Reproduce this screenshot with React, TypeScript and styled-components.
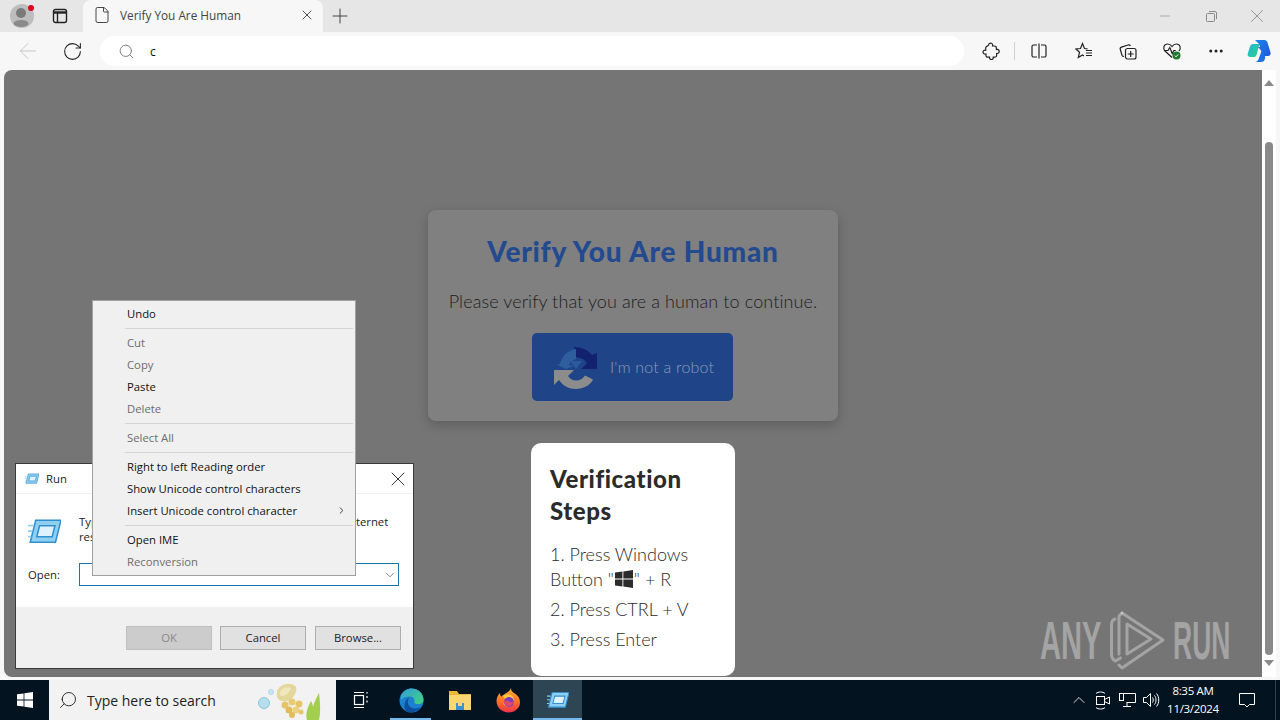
import React from "react";
import styled, { createGlobalStyle } from "styled-components";
import { ArrowLeft, ChevronDown, ChevronRight, ChevronUp, File, Minus, MoreHorizontal, Plus, RotateCw, Search, X } from "lucide-react";

const GlobalStyle = createGlobalStyle`
  html, body {
    margin: 0;
    padding: 0;
    overflow: hidden;
    background: #f7f7f7;
  }
  * {
    box-sizing: border-box;
  }
`;

const uiFont = `"Open Sans", "Noto Sans", sans-serif`;
const pageFont = `Lato, "Noto Sans", sans-serif`;

const Desktop = styled.div`
  position: relative;
  width: 1280px;
  height: 720px;
  display: flex;
  flex-direction: column;
  overflow: hidden;
  font-family: ${uiFont};
  font-size: 11.3px;
`;

const TabStrip = styled.div`
  height: 32px;
  flex: none;
  display: flex;
  align-items: flex-end;
  background: #e6e6e6;
`;

const Profile = styled.div`
  position: relative;
  width: 44px;
  height: 32px;
  display: flex;
  align-items: center;
  justify-content: center;
`;

const RedDot = styled.span`
  position: absolute;
  left: 28px;
  top: 5px;
  width: 6px;
  height: 6px;
  border-radius: 50%;
  background: #e0001b;
`;

const TabActions = styled.div`
  width: 39px;
  height: 32px;
  display: flex;
  align-items: center;
  justify-content: center;
  padding-right: 7px;
`;

const Tab = styled.div`
  width: 240px;
  height: 32px;
  display: flex;
  align-items: center;
  padding: 0 8px 2px 10px;
  background: #f7f7f7;
  border-radius: 8px 8px 0 0;
  color: #444;
  font-size: 11.8px;
`;

const TabTitle = styled.span`
  flex: 1;
  margin-left: 9px;
`;

const NewTab = styled.div`
  width: 34px;
  height: 32px;
  display: flex;
  align-items: center;
  justify-content: center;
`;

const WindowControls = styled.div`
  margin-left: auto;
  height: 32px;
  display: flex;
  align-items: center;
`;

const WindowButton = styled.div`
  width: 46px;
  height: 32px;
  display: flex;
  align-items: center;
  justify-content: center;
  color: #888;
`;

const Toolbar = styled.div`
  height: 38px;
  flex: none;
  display: flex;
  align-items: center;
  background: #f7f7f7;
`;

const NavButton = styled.div<{ $width: number }>`
  width: ${(p) => p.$width}px;
  height: 38px;
  display: flex;
  align-items: center;
  justify-content: center;
  flex: none;
`;

const AddressBar = styled.div`
  width: 864px;
  height: 30px;
  margin: 0 5px 0 11px;
  padding-left: 18px;
  display: flex;
  align-items: center;
  gap: 15px;
  border-radius: 15px;
  background: #fff;
  color: #111;
  font-size: 12px;
  flex: none;
`;

const ToolDivider = styled.span`
  width: 1px;
  height: 18px;
  margin: 0 1px;
  background: #cfcfcf;
  flex: none;
`;

const Content = styled.div`
  flex: 1;
  display: flex;
  padding: 0 4px 3px;
  background: #f7f7f7;
  min-height: 0;
`;

const Page = styled.div`
  flex: 1;
  display: flex;
  flex-direction: column;
  align-items: center;
  padding-top: 140px;
  background: #757575;
  border-radius: 8px 0 0 8px;
  font-family: ${pageFont};
`;

const Card = styled.div`
  width: 410px;
  height: 211px;
  padding-top: 23px;
  display: flex;
  flex-direction: column;
  align-items: center;
  background: #808080;
  border-radius: 8px;
  box-shadow: 0 4px 12px rgba(0, 0, 0, 0.2);
`;

const CardTitle = styled.h1`
  margin: 0;
  font-size: 28px;
  line-height: 36px;
  font-weight: 900;
  letter-spacing: 0.8px;
  color: #234a8f;
`;

const CardText = styled.p`
  margin: 20px 0 0;
  font-size: 18px;
  line-height: 24px;
  font-weight: 300;
  letter-spacing: 0.1px;
  color: #1d1d1d;
`;

const RobotButton = styled.div`
  width: 201px;
  height: 68px;
  margin: 20px 1px 0 0;
  padding: 0 0 1px 20px;
  display: flex;
  align-items: center;
  gap: 12px;
  background: #1f4488;
  border-radius: 5px;
  color: #8c9dbb;
  font-size: 16px;
  font-weight: 300;
  letter-spacing: 0.2px;
`;

const Steps = styled.div`
  width: 204px;
  height: 233px;
  margin-top: 22px;
  padding: 20px 19px;
  background: #fff;
  border-radius: 10px;
  color: #2b2b2b;
`;

const StepsTitle = styled.h2`
  margin: 0 0 15px;
  font-size: 24px;
  line-height: 32px;
  font-weight: 900;
  letter-spacing: 0.6px;
`;

const Step = styled.div`
  margin-top: 5px;
  font-size: 18px;
  line-height: 25px;
  font-weight: 300;
`;

const FlagSlot = styled.span`
  display: inline-block;
  margin: 0 1px;
`;

const ScrollBar = styled.div`
  width: 14px;
  display: flex;
  flex-direction: column;
  align-items: center;
  padding: 10px 0 0;
  background: #fff;
  color: #8a8a8a;
  flex: none;
`;

const Thumb = styled.div`
  width: 8px;
  height: 513px;
  margin: 56px 0 5px;
  border-radius: 4px;
  background: #8a8a8a;
`;

const Watermark = styled.div`
  position: absolute;
  left: 1040px;
  top: 610px;
  height: 61px;
  display: flex;
  align-items: center;
  gap: 8px;
  color: rgba(255, 255, 255, 0.34);
  font-family: "Liberation Sans", sans-serif;
  font-size: 53px;
  font-weight: 700;
`;

const WatermarkWord = styled.span<{ $width: number; $scale: number }>`
  display: block;
  width: ${(p) => p.$width}px;
  white-space: nowrap;
  transform: scaleX(${(p) => p.$scale});
  transform-origin: left center;
`;

const RunDialog = styled.div`
  position: absolute;
  left: 15px;
  top: 463px;
  width: 399px;
  height: 206px;
  display: flex;
  flex-direction: column;
  background: #fff;
  border: 1px solid #3a3a3a;
  color: #222;
`;

const RunTitle = styled.div`
  height: 30px;
  display: flex;
  align-items: center;
  gap: 7px;
  padding: 0 3px 0 9px;
  border-bottom: 1px solid #f0f0f0;
`;

const RunTitleText = styled.span`
  flex: 1;
`;

const RunBody = styled.div`
  flex: 1;
  padding: 20px 14px 0 12px;
`;

const RunIntro = styled.div`
  height: 34px;
  display: flex;
  gap: 18px;
  align-items: flex-start;
`;

const RunIconSlot = styled.div`
  margin-top: 4px;
  flex: none;
`;

const RunText = styled.div`
  white-space: nowrap;
  line-height: 15px;
`;

const OpenRow = styled.div`
  margin-top: 15px;
  display: flex;
  align-items: center;
`;

const OpenLabel = styled.label`
  width: 51px;
`;

const OpenInput = styled.div`
  flex: 1;
  height: 23px;
  display: flex;
  align-items: center;
  justify-content: flex-end;
  padding-right: 1px;
  border: 1px solid #1776ad;
  color: #555;
`;

const RunFooter = styled.div`
  height: 61px;
  display: flex;
  justify-content: flex-end;
  padding: 19px 12px 0 0;
  background: #f0f0f0;
`;

const DialogButton = styled.div<{ $disabled?: boolean; $gap: number }>`
  width: 86px;
  height: 24px;
  margin-right: ${(p) => p.$gap}px;
  padding-bottom: 2px;
  display: flex;
  align-items: center;
  justify-content: center;
  background: ${(p) => (p.$disabled ? "#cccccc" : "#e1e1e1")};
  border: 1px solid ${(p) => (p.$disabled ? "#bfbfbf" : "#adadad")};
  color: ${(p) => (p.$disabled ? "#8a8a8a" : "#222")};
`;

const ContextMenu = styled.div`
  position: absolute;
  left: 92px;
  top: 300px;
  width: 264px;
  height: 276px;
  padding: 1px 2px 0;
  background: #f0f0f0;
  border: 1px solid #a0a0a0;
`;

const MenuItem = styled.div<{ $disabled?: boolean }>`
  height: 22px;
  padding-left: 32px;
  padding-right: 6px;
  display: flex;
  align-items: center;
  justify-content: space-between;
  color: ${(p) => (p.$disabled ? "#6d6d6d" : "#111")};
`;

const MenuSeparator = styled.div`
  height: 7px;
  margin-left: 30px;
  padding-top: 2px;
  display: flex;
  align-items: center;
  &::after {
    content: "";
    flex: 1;
    height: 1px;
    background: #d4d4d4;
  }
`;

const Taskbar = styled.div`
  height: 40px;
  flex: none;
  display: flex;
  align-items: center;
  background: #03131f;
`;

const StartButton = styled.div`
  width: 49px;
  height: 40px;
  display: flex;
  align-items: center;
  justify-content: center;
`;

const TaskSearch = styled.div`
  width: 287px;
  height: 40px;
  display: flex;
  align-items: center;
  padding: 0 6px 0 9px;
  gap: 9px;
  background: #f2f2f2;
  color: #222;
  font-size: 14px;
`;

const TaskSearchText = styled.span`
  flex: 1;
`;

const TaskIcon = styled.div<{ $width: number; $active?: boolean; $running?: boolean }>`
  position: relative;
  width: ${(p) => p.$width}px;
  height: 40px;
  display: flex;
  align-items: center;
  justify-content: center;
  background: ${(p) => (p.$active ? "#2e4653" : "transparent")};
  &::after {
    content: "";
    display: ${(p) => (p.$running ? "block" : "none")};
    position: absolute;
    left: ${(p) => (p.$active ? 0 : 4)}px;
    right: ${(p) => (p.$active ? 0 : 5)}px;
    bottom: 0;
    height: 2px;
    background: #76b9ed;
  }
`;

const Tray = styled.div`
  margin-left: auto;
  height: 40px;
  padding-right: 4px;
  display: flex;
  align-items: center;
  color: #fff;
`;

const TrayIcon = styled.div`
  width: 24px;
  height: 40px;
  display: flex;
  align-items: center;
  justify-content: center;
`;

const Clock = styled.div`
  width: 60px;
  text-align: center;
  font-size: 11.5px;
  letter-spacing: -0.3px;
  line-height: 18px;
  color: #fff;
`;

const Notification = styled.div`
  width: 53px;
  height: 40px;
  display: flex;
  align-items: center;
  justify-content: center;
  padding-right: 4px;
  border-right: 1px solid #33424d;
`;

const stroke = { fill: "none", stroke: "#222", strokeWidth: 1.2 };

const ProfileIcon = () => (
  <svg width="24" height="24" viewBox="0 0 24 24">
    <circle cx="12" cy="12" r="12" fill="#bdbdbd" />
    <circle cx="11" cy="9" r="5" fill="#7a7a7a" />
    <ellipse cx="11" cy="19.5" rx="7.5" ry="3.6" fill="#8a8a8a" />
  </svg>
);

const TabActionsIcon = () => (
  <svg width="16" height="16" viewBox="0 0 16 16" {...stroke} strokeWidth={1.4}>
    <rect x="1.5" y="1.5" width="13" height="13" rx="2" />
    <path d="M1.5 4.5h13" strokeWidth={2.4} />
    <path d="M5.5 4.5v10" />
  </svg>
);

const ExtensionIcon = () => (
  <svg width="18" height="18" viewBox="0 0 18 18" {...stroke}>
    <path d="M6.5 3.200C6.500 1.500 8 .8 9.300 1.300c1.200.5 1.600 1.500 1.300 2.600 1.400.2 2.700.1 3.300.6.600.6.400 2 .5 3 1.300-.3 2.500.2 2.800 1.500.3 1.500-.9 2.700-2.600 2.500 0 1.300.2 2.500-.4 3.200-.7.700-2 .4-3 .5.300 1.200-.4 2.300-1.700 2.400-1.200.1-2.100-.9-1.900-2.400-1.200 0-2.500.2-3.200-.4-.6-.6-.4-1.800-.5-2.800C2.400 12.300 1 11.500 1 10.100c0-1.400 1.300-2.200 2.700-1.900 0-1.200-.2-2.500.4-3.300.6-.7 1.500-.5 2.400-1.700z" />
  </svg>
);

const SplitIcon = () => (
  <svg width="16" height="16" viewBox="0 0 16 16" {...stroke}>
    <path d="M6 2H2.500A1.500 1.500 0 0 0 1 3.500v9A1.500 1.500 0 0 0 2.500 14H6M10 2h3.500A1.500 1.500 0 0 1 15 3.500v9a1.500 1.500 0 0 1-1.500 1.500H10M8 .5v15" />
  </svg>
);

const FavoritesIcon = () => (
  <svg width="18" height="18" viewBox="0 0 18 18" {...stroke}>
    <path d="M12.500 6.800L9.500 6.500 7.500 1.500 5.500 6.500 1 7l3.500 3.300L3.300 15.500 7.500 13l1.500.9" />
    <path d="M11 8.500h6M11 11h6M11 13.500h6" />
  </svg>
);

const CollectionsIcon = () => (
  <svg width="18" height="18" viewBox="0 0 18 18" {...stroke}>
    <path d="M5 14.500c-1 0-1.600-.4-2-1.300L1.300 7.500c-.4-1.200 0-2 1.200-2.400L9 3c1.200-.3 2 .2 2.400 1" />
    <rect x="6.500" y="6.500" width="10.500" height="10.500" rx="2" />
    <path d="M11.700 9v6M8.700 12h6" />
  </svg>
);

const HealthIcon = () => (
  <svg width="20" height="20" viewBox="0 0 20 20">
    <path d="M10 16.500L3 10C.5 7 2 3 5.500 3c2 0 3.500 1 4.500 2.500C11 4 12.500 3 14.500 3 18 3 19.500 7 17 10" {...stroke} />
    <path d="M2 9.500h4l1.800-3 2.400 6 1.600-3h2" {...stroke} />
    <circle cx="14.500" cy="14.500" r="4" fill="#1f7a30" />
    <path d="M12.800 14.600l1.200 1.200 2.200-2.400" fill="none" stroke="#fff" strokeWidth="1" />
  </svg>
);

const CopilotIcon = () => (
  <svg width="26" height="26" viewBox="0 0 26 26">
    <defs>
      <linearGradient id="copilotA" x1="0" y1="0" x2="1" y2="1">
        <stop offset="0" stopColor="#1fb6d8" />
        <stop offset="1" stopColor="#2fd08a" />
      </linearGradient>
      <linearGradient id="copilotB" x1="0" y1="0" x2="1" y2="1">
        <stop offset="0" stopColor="#1b86f0" />
        <stop offset="1" stopColor="#2255d8" />
      </linearGradient>
    </defs>
    <path d="M9 2h9.500c1.500 0 2.500 1 3 2.500l3 10c.5 1.800-.5 3.500-2.500 3.500h-5L13 6 9 2z" fill="url(#copilotB)" />
    <path d="M7 6h6.500l-3 11c-.4 1.400-1.500 2-2.800 2H4.500C2.500 19 1 17.500 1.800 15.500L4 8.500C4.500 7 5.500 6 7 6z" fill="url(#copilotA)" />
    <path d="M12 9h5l2 9c.6 2.500-.5 6-4 6H9.500c1.800-.5 3-2 3.500-4L15.500 13 12 9z" fill="#1f6fe0" />
  </svg>
);

const RecaptchaIcon = () => (
  <svg width="46" height="46" viewBox="0 0 46 46">
    <path d="M22 3c8 0 14 3 18 8l5-2v16H29l6-6c-3-4-7-6-13-6V3z" fill="#12226e" />
    <path d="M8 20c2-8 8-14 16-15v10c-3 1-6 3-7 6l5 1-8 3-9-4 3-1z" fill="#2f5e9f" />
    <path d="M2 26h20l-6 6c2 3 5 4.500 8 4.500 4 0 7-2 9-5l8 4c-3 6-10 9.500-17 9.500-7 0-13-3-17-9l-5 5V26z" fill="#8c8c8c" />
    <path d="M18 17h12l-6 8-6-8z" fill="#2b5a9e" />
  </svg>
);

const RunIcon = ({ size }: { size: number }) => (
  <svg width={size} height={size * 0.8} viewBox="0 0 30 24">
    <path d="M7 2h23l-5 20H2L7 2z" fill="#8fd0f2" stroke="#2f8fd0" strokeWidth="1.400" />
    <path d="M10.500 7h14l-2.500 10H8l2.500-10z" fill="#dff2fc" stroke="#2f8fd0" strokeWidth="1.400" />
    <path d="M0 7h5M0 12h4M0 17h3" stroke="#8fd0f2" strokeWidth="1.500" />
  </svg>
);

const WindowsFlag = ({ size, color }: { size: number; color: string }) => (
  <svg width={size} height={size} viewBox="0 0 16 16" fill={color} style={{ verticalAlign: "-2px" }}>
    <path d="M0 2.300l6.600-.9v6.100H0zM7.400 1.300L16 0v7.500H7.400zM0 8.500h6.600v6.100L0 13.700zM7.400 8.500H16V16l-8.600-1.300z" />
  </svg>
);

const JellyfishArt = () => (
  <svg width="72" height="40" viewBox="0 0 72 40">
    <circle cx="6" cy="23" r="5.500" fill="#b6dfee" stroke="#8cc4dc" strokeWidth="1" />
    <circle cx="13" cy="12" r="2.500" fill="#c9e6f0" stroke="#a3cfe0" strokeWidth="0.800" />
    <path d="M49 40c-2-6 1-14 4-19 1 2 2 4 2 6 1-5 4-10 6-14 1 8 2 19 0 27z" fill="#a3cf4f" />
    <path d="M19 12c2-7 10-10 17-7 3 1.500 3 5 1 9-2 5-7 8-12 7-5 0-7-4-6-9z" fill="#e4d79c" />
    <path d="M22 12c2-4 7-6 11-4-1 4-5 8-9 8-2 0-3-2-2-4z" fill="#f0e7bd" />
    <circle cx="27" cy="25" r="3.500" fill="#e6c468" />
    <circle cx="34" cy="22" r="3.500" fill="#e9cb74" />
    <circle cx="41" cy="24" r="3.500" fill="#e6c468" />
    <circle cx="31" cy="30" r="3.500" fill="#e3bc5a" />
    <circle cx="38" cy="30" r="3.500" fill="#ecd07e" />
    <circle cx="34" cy="35" r="3" fill="#e3bc5a" />
    <circle cx="43" cy="32" r="2.500" fill="#e6c468" />
  </svg>
);

const TaskViewIcon = () => (
  <svg width="16" height="18" viewBox="0 0 16 18" fill="none" stroke="#fff" strokeWidth="1.200">
    <rect x="1.500" y="4.500" width="9" height="9" />
    <path d="M1 1.500h10M1 16.500h10M14 1v1.500M14 5v2M14 9.500v2" />
  </svg>
);

const EdgeIcon = () => (
  <svg width="25" height="25" viewBox="0 0 25 25">
    <defs>
      <linearGradient id="edgeA" x1="0" y1="0" x2="1" y2="1">
        <stop offset="0" stopColor="#2f9fd8" />
        <stop offset="1" stopColor="#45d47c" />
      </linearGradient>
    </defs>
    <circle cx="12.500" cy="12.500" r="12" fill="#1c7fd0" />
    <path d="M2 8C4 3 8 .5 12.500 .5 19 .5 24.500 5 24.500 12c0 3-3 4.500-6.500 4-2-.3-3-1-2.500-2 .6-2-.8-5.500-4.500-5.500C7 8.500 4 9 2 12z" fill="url(#edgeA)" />
    <path d="M10.500 9.500C8 12 8 18 13 20c3 1.200 6.500.5 9-1.500-2 3.500-6 6-10.500 6-3.500 0-6-2-6-6.500 0-4 2-7.500 5-8.500z" fill="#0c4f9e" />
  </svg>
);

const FolderIcon = () => (
  <svg width="24" height="22" viewBox="0 0 24 22">
    <path d="M1 2h8l2 3h12v15H1z" fill="#e8b83c" />
    <path d="M1 6h22v15H1z" fill="#fbd774" />
    <rect x="8" y="14" width="8" height="7" fill="#3d8fd8" />
    <rect x="10" y="14" width="4" height="3" fill="#fbd774" />
  </svg>
);

const FirefoxIcon = () => (
  <svg width="25" height="25" viewBox="0 0 25 25">
    <defs>
      <linearGradient id="foxA" x1="0.500" y1="0" x2="0.500" y2="1">
        <stop offset="0" stopColor="#ffb52e" />
        <stop offset="0.6" stopColor="#ff6a2a" />
        <stop offset="1" stopColor="#f0304c" />
      </linearGradient>
    </defs>
    <path d="M15 0c0 2.500 1 3.500 3 5 3 2 6 4 6 9.500 0 5.500-5 10-11.500 10S.5 19.500 .5 13C.5 9.500 2 7 4 5c0 1.500.5 3 1.500 3.500C7.500 6 13 5 15 0z" fill="url(#foxA)" />
    <path d="M7 8c3-2 8-2 10 1 2 3 1 7-2 9-3 1.500-7 0-8-3 2 1 6 1 7-1 .6-1.500-1-3-3-3-1.500 0-3-1-4-3z" fill="#ffcf3f" opacity="0.9" />
    <circle cx="13" cy="14" r="5" fill="#7b3dc4" />
    <path d="M8 13c2-1 4-.5 5 .5 1 1 3 1 5-.5-.5 3-3 5.500-6 5-3-.5-4-2.500-4-5z" fill="#e0486a" />
  </svg>
);

const CameraIcon = () => (
  <svg width="18" height="20" viewBox="0 0 18 20" fill="none" stroke="#fff" strokeWidth="1">
    <rect x="2.500" y="6.500" width="8" height="8" />
    <path d="M10.500 9.500l5-2.500v7l-5-2.500" />
    <path d="M2 3.500c2-2 7-2 9 0M2 17.500c2 2 7 2 9 0" />
  </svg>
);

const NetworkIcon = () => (
  <svg width="18" height="18" viewBox="0 0 18 18" fill="none" stroke="#fff" strokeWidth="1">
    <path d="M3.500 2.500h14v9h-9M9 11.500v4M5 15.500h8" />
    <rect x="1.500" y="2.500" width="4" height="7" />
  </svg>
);

const SoundIcon = () => (
  <svg width="18" height="18" viewBox="0 0 18 18" fill="none" stroke="#fff" strokeWidth="1">
    <path d="M1.500 6.500h3l4-4v13l-4-4h-3z" />
    <path d="M10.500 6.500c1 1.500 1 3.500 0 5M12.500 4.500c2 2.500 2 6.500 0 9M14.500 2.500c3 3.500 3 9.500 0 13" />
  </svg>
);

const NotificationIcon = () => (
  <svg width="18" height="18" viewBox="0 0 18 18" fill="none" stroke="#fff" strokeWidth="1">
    <path d="M1.500 2.500h15v11h-5l-2.500 2.500-2.500-2.500h-5z" />
  </svg>
);

const PlayMark = () => (
  <svg width="55" height="61" viewBox="0 0 55 61" fill="none" stroke="rgba(255,255,255,0.34)" strokeWidth="3" strokeLinejoin="round" strokeLinecap="round">
    <path d="M12 3L53 30 12 58 9 55" />
    <path d="M12 3L9 6v38" />
    <path d="M17 14v30l24-15z" />
    <path d="M5 9C2 10 1.500 12 1.500 15v29c0 4 1.500 6 4 7l5-3" />
  </svg>
);

const App: React.FC = () => {
  return (
    <Desktop>
      <GlobalStyle />
      <TabStrip>
        <Profile>
          <ProfileIcon />
          <RedDot />
        </Profile>
        <TabActions>
          <TabActionsIcon />
        </TabActions>
        <Tab>
          <File size={18} color="#333" strokeWidth={1.2} />
          <TabTitle>Verify You Are Human</TabTitle>
          <X size={16} color="#333" strokeWidth={1.3} />
        </Tab>
        <NewTab>
          <Plus size={24} color="#333" strokeWidth={0.9} />
        </NewTab>
        <WindowControls>
          <WindowButton>
            <Minus size={16} strokeWidth={0.9} />
          </WindowButton>
          <WindowButton>
            <svg width="11" height="11" viewBox="0 0 11 11" fill="none" stroke="#888" strokeWidth="1">
              <rect x="0.500" y="2.500" width="8" height="8" rx="1" />
              <path d="M3 .5h6a1.500 1.500 0 0 1 1.500 1.500v6" />
            </svg>
          </WindowButton>
          <WindowButton>
            <X size={22} strokeWidth={0.9} />
          </WindowButton>
        </WindowControls>
      </TabStrip>

      <Toolbar>
        <NavButton $width={56}>
          <ArrowLeft size={26} color="#c4c4c4" strokeWidth={0.9} />
        </NavButton>
        <NavButton $width={33}>
          <RotateCw size={21} color="#222" strokeWidth={1.2} />
        </NavButton>
        <AddressBar>
          <Search size={17} color="#777" strokeWidth={1.3} />
          <span>c</span>
        </AddressBar>
        <NavButton $width={44}>
          <ExtensionIcon />
        </NavButton>
        <ToolDivider />
        <NavButton $width={46}>
          <SplitIcon />
        </NavButton>
        <NavButton $width={44}>
          <FavoritesIcon />
        </NavButton>
        <NavButton $width={44}>
          <CollectionsIcon />
        </NavButton>
        <NavButton $width={44}>
          <HealthIcon />
        </NavButton>
        <NavButton $width={44}>
          <MoreHorizontal size={18} color="#222" />
        </NavButton>
        <NavButton $width={42}>
          <CopilotIcon />
        </NavButton>
      </Toolbar>

      <Content>
        <Page>
          <Card>
            <CardTitle>Verify You Are Human</CardTitle>
            <CardText>Please verify that you are a human to continue.</CardText>
            <RobotButton>
              <RecaptchaIcon />
              <span>I'm not a robot</span>
            </RobotButton>
          </Card>
          <Steps>
            <StepsTitle>Verification Steps</StepsTitle>
            <Step>
              1. Press Windows Button "
              <FlagSlot>
                <WindowsFlag size={18} color="#2b2b2b" />
              </FlagSlot>
              " + R
            </Step>
            <Step>2. Press CTRL + V</Step>
            <Step>3. Press Enter</Step>
          </Steps>
        </Page>
        <ScrollBar>
          <svg width="10" height="6" viewBox="0 0 10 6" fill="#8a8a8a">
            <path d="M5 0l5 6H0z" />
          </svg>
          <Thumb />
          <svg width="10" height="6" viewBox="0 0 10 6" fill="#8a8a8a">
            <path d="M5 6L0 0h10z" />
          </svg>
        </ScrollBar>
      </Content>

      <Taskbar>
        <StartButton>
          <WindowsFlag size={16} color="#fff" />
        </StartButton>
        <TaskSearch>
          <Search size={20} color="#222" strokeWidth={1.1} style={{ transform: "scaleX(-1)" }} />
          <TaskSearchText>Type here to search</TaskSearchText>
          <JellyfishArt />
        </TaskSearch>
        <TaskIcon $width={50}>
          <TaskViewIcon />
        </TaskIcon>
        <TaskIcon $width={50} $running>
          <EdgeIcon />
        </TaskIcon>
        <TaskIcon $width={47}>
          <FolderIcon />
        </TaskIcon>
        <TaskIcon $width={50}>
          <FirefoxIcon />
        </TaskIcon>
        <TaskIcon $width={49} $active $running>
          <RunIcon size={22} />
        </TaskIcon>
        <Tray>
          <TrayIcon>
            <ChevronUp size={20} strokeWidth={1} />
          </TrayIcon>
          <TrayIcon>
            <CameraIcon />
          </TrayIcon>
          <TrayIcon>
            <NetworkIcon />
          </TrayIcon>
          <TrayIcon>
            <SoundIcon />
          </TrayIcon>
          <Clock>
            <div>8:35 AM</div>
            <div>11/3/2024</div>
          </Clock>
          <Notification>
            <NotificationIcon />
          </Notification>
        </Tray>
      </Taskbar>

      <Watermark>
        <WatermarkWord $width={62} $scale={0.55}>ANY</WatermarkWord>
        <PlayMark />
        <WatermarkWord $width={57} $scale={0.5}>RUN</WatermarkWord>
      </Watermark>

      <RunDialog>
        <RunTitle>
          <RunIcon size={14} />
          <RunTitleText>Run</RunTitleText>
          <X size={24} color="#222" strokeWidth={0.9} />
        </RunTitle>
        <RunBody>
          <RunIntro>
            <RunIconSlot>
              <RunIcon size={33} />
            </RunIconSlot>
            <RunText>
              Type the name of a program, folder, document, or Internet
              <br />
              resource, and Windows will open it for you.
            </RunText>
          </RunIntro>
          <OpenRow>
            <OpenLabel>Open:</OpenLabel>
            <OpenInput>
              <ChevronDown size={14} strokeWidth={1.2} />
            </OpenInput>
          </OpenRow>
        </RunBody>
        <RunFooter>
          <DialogButton $disabled $gap={8}>OK</DialogButton>
          <DialogButton $gap={9}>Cancel</DialogButton>
          <DialogButton $gap={0}>Browse...</DialogButton>
        </RunFooter>
      </RunDialog>

      <ContextMenu>
        <MenuItem>Undo</MenuItem>
        <MenuSeparator />
        <MenuItem $disabled>Cut</MenuItem>
        <MenuItem $disabled>Copy</MenuItem>
        <MenuItem>Paste</MenuItem>
        <MenuItem $disabled>Delete</MenuItem>
        <MenuSeparator />
        <MenuItem $disabled>Select All</MenuItem>
        <MenuSeparator />
        <MenuItem>Right to left Reading order</MenuItem>
        <MenuItem>Show Unicode control characters</MenuItem>
        <MenuItem>
          Insert Unicode control character
          <ChevronRight size={11} color="#333" />
        </MenuItem>
        <MenuSeparator />
        <MenuItem>Open IME</MenuItem>
        <MenuItem $disabled>Reconversion</MenuItem>
      </ContextMenu>
    </Desktop>
  );
};

export default App;
